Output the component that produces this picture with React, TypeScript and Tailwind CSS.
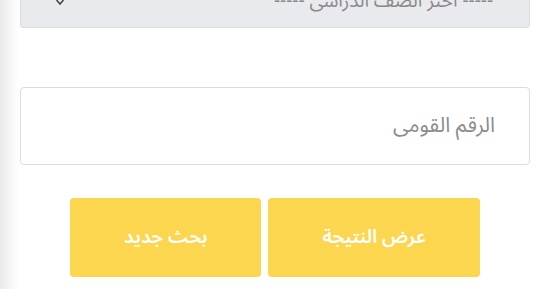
export default function App() {
  return (
    <div
      dir="rtl"
      className="relative w-[550px] h-[289px] overflow-hidden bg-white"
      style={{ fontFamily: '"Noto Sans Arabic", "DejaVu Sans", sans-serif' }}
    >
      {/* left shadow strip */}
      <div className="absolute left-0 top-0 h-full w-[18px] bg-gradient-to-r from-[#e9e9e9] to-white" />

      <div className="relative mx-[20px] flex flex-col">
        {/* select */}
        <div className="-mt-[25px] flex h-[53px] items-center justify-between rounded-b-[3px] border border-[#d9dadd] bg-[#e9eaee] pr-[36px] pl-[34px]">
          <span className="text-[19px] text-[#8a8a8a]">----- اختر الصف الدراسى -----</span>
          <svg width="10" height="8" viewBox="0 0 10 8" className="text-[#444]">
            <path d="M1.5 2 L5 6 L8.5 2" fill="none" stroke="currentColor" strokeWidth="1.5" />
          </svg>
        </div>

        {/* national id input */}
        <div className="mt-[59px] flex h-[78px] items-center rounded-[4px] border border-[#dcdcdc] bg-white pr-[34px]">
          <span className="text-[21px] text-[#8c8c8c]">الرقم القومى</span>
        </div>

        {/* buttons */}
        <div className="mt-[33px] flex justify-center gap-[7px]">
          <button className="flex h-[79px] items-center rounded-[4px] bg-[#fdd64f] px-[54px] text-[19px] font-semibold text-white">
            عرض النتيجة
          </button>
          <button className="flex h-[79px] items-center rounded-[4px] bg-[#fdd64f] px-[54px] text-[19px] font-semibold text-white">
            بحث جديد
          </button>
        </div>
      </div>
    </div>
  );
}
